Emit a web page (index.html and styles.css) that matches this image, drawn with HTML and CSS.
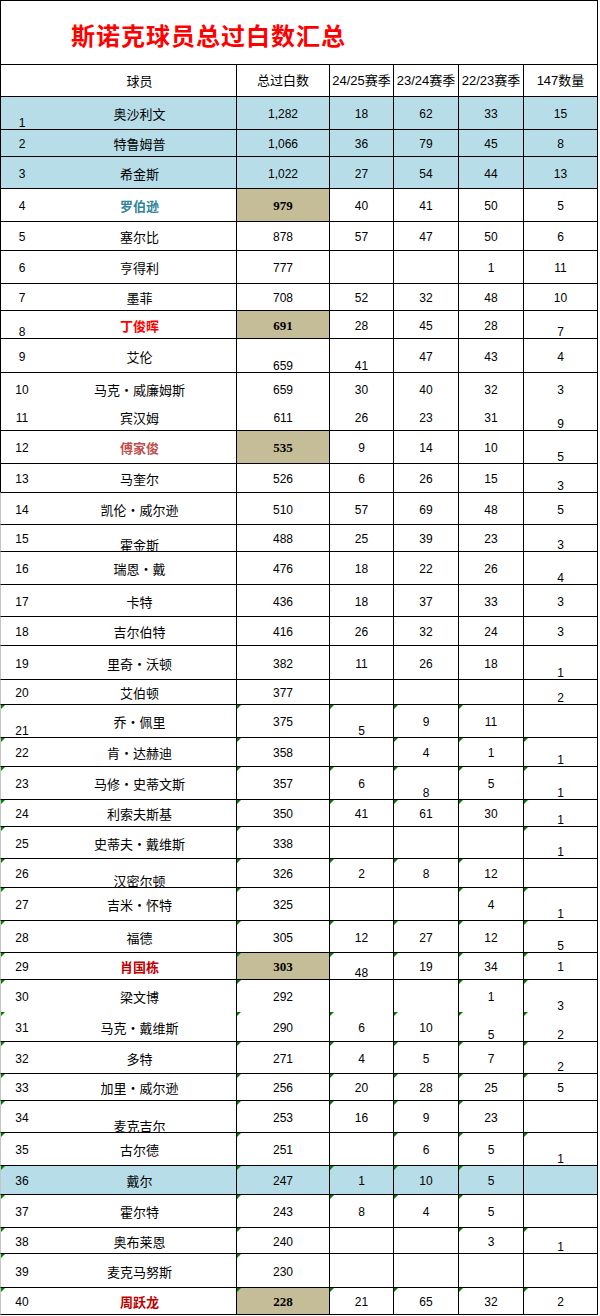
FILE: index.html
```html
<!DOCTYPE html>
<html lang="zh">
<head>
<meta charset="utf-8">
<title>斯诺克球员总过白数汇总</title>
<link rel="stylesheet" href="styles.css">
</head>
<body>
<div class="sheet">
  <div class="title"><h1>斯诺克球员总过白数汇总</h1></div>
  <div class="row head h32"><div class="c rk"></div><div class="c nm">球员</div><div class="c n">总过白数</div><div class="c n">24/25赛季</div><div class="c n">23/24赛季</div><div class="c n">22/23赛季</div><div class="c n">147数量</div></div>

  <div class="row h33 blue"><div class="c rk b">1</div><div class="c nm">奥沙利文</div><div class="c n">1,282</div><div class="c n">18</div><div class="c n">62</div><div class="c n">33</div><div class="c n">15</div></div>
  <div class="row h27 blue"><div class="c rk">2</div><div class="c nm">特鲁姆普</div><div class="c n">1,066</div><div class="c n">36</div><div class="c n">79</div><div class="c n">45</div><div class="c n">8</div></div>
  <div class="row h32 blue"><div class="c rk">3</div><div class="c nm">希金斯</div><div class="c n">1,022</div><div class="c n">27</div><div class="c n">54</div><div class="c n">44</div><div class="c n">13</div></div>
  <div class="row h33"><div class="c rk">4</div><div class="c nm teal">罗伯逊</div><div class="c n hl">979</div><div class="c n">40</div><div class="c n">41</div><div class="c n">50</div><div class="c n">5</div></div>
  <div class="row h29"><div class="c rk">5</div><div class="c nm">塞尔比</div><div class="c n">878</div><div class="c n">57</div><div class="c n">47</div><div class="c n">50</div><div class="c n">6</div></div>
  <div class="row h33"><div class="c rk">6</div><div class="c nm">亨得利</div><div class="c n">777</div><div class="c n"></div><div class="c n"></div><div class="c n">1</div><div class="c n">11</div></div>
  <div class="row h27"><div class="c rk">7</div><div class="c nm">墨菲</div><div class="c n">708</div><div class="c n">52</div><div class="c n">32</div><div class="c n">48</div><div class="c n">10</div></div>
  <div class="row h28"><div class="c rk b">8</div><div class="c nm red">丁俊晖</div><div class="c n hl">691</div><div class="c n">28</div><div class="c n">45</div><div class="c n">28</div><div class="c n b">7</div></div>
  <div class="row h34"><div class="c rk">9</div><div class="c nm">艾伦</div><div class="c n b">659</div><div class="c n b">41</div><div class="c n">47</div><div class="c n">43</div><div class="c n">4</div></div>
  <div class="row h32"><div class="c rk">10</div><div class="c nm">马克·威廉姆斯</div><div class="c n">659</div><div class="c n">30</div><div class="c n">40</div><div class="c n">32</div><div class="c n">3</div></div>
  <div class="row h26 nb"><div class="c rk">11</div><div class="c nm">宾汉姆</div><div class="c n">611</div><div class="c n">26</div><div class="c n">23</div><div class="c n">31</div><div class="c n b">9</div></div>
  <div class="row h33"><div class="c rk">12</div><div class="c nm rose">傅家俊</div><div class="c n hl">535</div><div class="c n">9</div><div class="c n">14</div><div class="c n">10</div><div class="c n b">5</div></div>
  <div class="row h29"><div class="c rk">13</div><div class="c nm">马奎尔</div><div class="c n">526</div><div class="c n">6</div><div class="c n">26</div><div class="c n">15</div><div class="c n b">3</div></div>
  <div class="row h32 lg"><div class="c rk">14</div><div class="c nm">凯伦·威尔逊</div><div class="c n">510</div><div class="c n">57</div><div class="c n">69</div><div class="c n">48</div><div class="c n">5</div></div>
  <div class="row h27 lg"><div class="c rk">15</div><div class="c nm b">霍金斯</div><div class="c n">488</div><div class="c n">25</div><div class="c n">39</div><div class="c n">23</div><div class="c n b">3</div></div>
  <div class="row h33 lg"><div class="c rk">16</div><div class="c nm">瑞恩·戴</div><div class="c n">476</div><div class="c n">18</div><div class="c n">22</div><div class="c n">26</div><div class="c n b">4</div></div>
  <div class="row h32 lg"><div class="c rk">17</div><div class="c nm">卡特</div><div class="c n">436</div><div class="c n">18</div><div class="c n">37</div><div class="c n">33</div><div class="c n">3</div></div>
  <div class="row h29 lg"><div class="c rk">18</div><div class="c nm">吉尔伯特</div><div class="c n">416</div><div class="c n">26</div><div class="c n">32</div><div class="c n">24</div><div class="c n">3</div></div>
  <div class="row h34 lg"><div class="c rk">19</div><div class="c nm">里奇·沃顿</div><div class="c n">382</div><div class="c n">11</div><div class="c n">26</div><div class="c n">18</div><div class="c n b">1</div></div>
  <div class="row h25 lg"><div class="c rk">20</div><div class="c nm">艾伯顿</div><div class="c n">377</div><div class="c n"></div><div class="c n"></div><div class="c n"></div><div class="c n b">2</div></div>
  <div class="row h33 lg"><div class="c rk b g">21</div><div class="c nm">乔·佩里</div><div class="c n g">375</div><div class="c n g b">5</div><div class="c n g">9</div><div class="c n g">11</div><div class="c n"></div></div>
  <div class="row h29 lg"><div class="c rk g">22</div><div class="c nm">肯·达赫迪</div><div class="c n g">358</div><div class="c n"></div><div class="c n g">4</div><div class="c n g">1</div><div class="c n g b">1</div></div>
  <div class="row h33 lg"><div class="c rk g">23</div><div class="c nm">马修·史蒂文斯</div><div class="c n g">357</div><div class="c n g">6</div><div class="c n g b">8</div><div class="c n g">5</div><div class="c n g b">1</div></div>
  <div class="row h27 lg"><div class="c rk g">24</div><div class="c nm">利索夫斯基</div><div class="c n g">350</div><div class="c n g">41</div><div class="c n g">61</div><div class="c n g">30</div><div class="c n g b">1</div></div>
  <div class="row h32 lg"><div class="c rk g">25</div><div class="c nm">史蒂夫·戴维斯</div><div class="c n g">338</div><div class="c n"></div><div class="c n"></div><div class="c n"></div><div class="c n g b">1</div></div>
  <div class="row h29 lg"><div class="c rk g">26</div><div class="c nm b">汉密尔顿</div><div class="c n g">326</div><div class="c n g">2</div><div class="c n g">8</div><div class="c n g">12</div><div class="c n"></div></div>
  <div class="row h33 lg"><div class="c rk g">27</div><div class="c nm">吉米·怀特</div><div class="c n g">325</div><div class="c n"></div><div class="c n"></div><div class="c n g">4</div><div class="c n g b">1</div></div>
  <div class="row h32 lg"><div class="c rk g">28</div><div class="c nm">福德</div><div class="c n g">305</div><div class="c n g">12</div><div class="c n g">27</div><div class="c n g">12</div><div class="c n g b">5</div></div>
  <div class="row h27 lg"><div class="c rk g">29</div><div class="c nm dred">肖国栋</div><div class="c n g hl">303</div><div class="c n g b">48</div><div class="c n g">19</div><div class="c n g">34</div><div class="c n g">1</div></div>
  <div class="row h33 lg"><div class="c rk g">30</div><div class="c nm">梁文博</div><div class="c n g">292</div><div class="c n"></div><div class="c n"></div><div class="c n g">1</div><div class="c n g b">3</div></div>
  <div class="row h29 lg nb"><div class="c rk g">31</div><div class="c nm">马克·戴维斯</div><div class="c n g">290</div><div class="c n g">6</div><div class="c n g">10</div><div class="c n g b">5</div><div class="c n g b">2</div></div>
  <div class="row h32 lg"><div class="c rk g">32</div><div class="c nm">多特</div><div class="c n g">271</div><div class="c n g">4</div><div class="c n g">5</div><div class="c n g">7</div><div class="c n g b">2</div></div>
  <div class="row h27 lg"><div class="c rk g">33</div><div class="c nm">加里·威尔逊</div><div class="c n g">256</div><div class="c n g">20</div><div class="c n g">28</div><div class="c n g">25</div><div class="c n g">5</div></div>
  <div class="row h32 lg"><div class="c rk g">34</div><div class="c nm b">麦克吉尔</div><div class="c n g">253</div><div class="c n g">16</div><div class="c n g">9</div><div class="c n g">23</div><div class="c n"></div></div>
  <div class="row h33 lg"><div class="c rk g">35</div><div class="c nm">古尔德</div><div class="c n g">251</div><div class="c n"></div><div class="c n g">6</div><div class="c n g">5</div><div class="c n g b">1</div></div>
  <div class="row h29 lg blue"><div class="c rk g">36</div><div class="c nm">戴尔</div><div class="c n g">247</div><div class="c n g">1</div><div class="c n g">10</div><div class="c n g">5</div><div class="c n"></div></div>
  <div class="row h33 lg"><div class="c rk g">37</div><div class="c nm">霍尔特</div><div class="c n g">243</div><div class="c n g">8</div><div class="c n g">4</div><div class="c n g">5</div><div class="c n"></div></div>
  <div class="row h26 lg"><div class="c rk g">38</div><div class="c nm">奥布莱恩</div><div class="c n g">240</div><div class="c n"></div><div class="c n"></div><div class="c n g">3</div><div class="c n g b">1</div></div>
  <div class="row h34 lg"><div class="c rk g">39</div><div class="c nm">麦克马努斯</div><div class="c n g">230</div><div class="c n"></div><div class="c n"></div><div class="c n"></div><div class="c n"></div></div>
  <div class="row h28 lg last"><div class="c rk g">40</div><div class="c nm dred">周跃龙</div><div class="c n g hl">228</div><div class="c n g">21</div><div class="c n g">65</div><div class="c n g">32</div><div class="c n g">2</div></div>
</div>
</body>
</html>
```

FILE: styles.css
```css
html, body {
  margin: 0;
  padding: 0;
  background: #ffffff;
}

.sheet {
  width: 598px;
  color: #000000;
}

.title {
  height: 64px;
  box-sizing: border-box;
  border: 1px solid #000000;
  border-bottom: none;
  display: flex;
  align-items: center;
  padding-left: 70px;
  padding-top: 4px;
}

.title h1 {
  margin: 0;
  font-family: "Noto Sans CJK SC", sans-serif;
  font-weight: 700;
  font-size: 24px;
  line-height: 1;
  letter-spacing: 1px;
  color: #ff0000;
}

.row {
  display: grid;
  grid-template-columns: 39px 196px 93px 64px 65px 65px 74px;
  box-sizing: border-box;
  border-top: 1px solid #000000;
  border-left: 1px solid #000000;
  border-right: 1px solid #000000;
}

.row.lg { border-left-color: #c4c4c4; }
.row.nb { border-top: none; }
.row.last { border-bottom: 1px solid #000000; }
.row.blue { background: #b7dde8; }

.h25 { height: 25px; }
.h26 { height: 26px; }
.h27 { height: 27px; }
.h28 { height: 28px; }
.h29 { height: 29px; }
.h32 { height: 32px; }
.h33 { height: 33px; }
.h34 { height: 34px; }

.c {
  position: relative;
  display: flex;
  align-items: center;
  justify-content: center;
  box-sizing: border-box;
  min-width: 0;
  padding-top: 2px;
  font-family: "Liberation Sans", "Noto Sans CJK SC", sans-serif;
  font-size: 12px;
  line-height: 14px;
  white-space: nowrap;
}

.c.n { border-left: 1px solid #000000; }

.c.b {
  align-items: flex-end;
  padding-top: 0;
  line-height: 12px;
}

.rk { padding-left: 3px; }

.nm {
  padding-left: 3px;
  font-family: "Noto Sans CJK SC", sans-serif;
  font-size: 13px;
}

.head .c {
  padding-top: 0;
  font-family: "Liberation Sans", "Noto Sans CJK SC", sans-serif;
  font-size: 13px;
}

.head .c.nm {
  font-family: "Noto Sans CJK SC", sans-serif;
}

.hl {
  background: #c4bd97;
  font-family: "Liberation Serif", serif;
  font-weight: 700;
  font-size: 13px;
}

.teal { color: #31849b; font-weight: 700; }
.red { color: #ff0000; font-weight: 700; }
.rose { color: #c0504d; font-weight: 700; }
.dred { color: #c00000; font-weight: 700; }

.g::before {
  content: "";
  position: absolute;
  left: 0;
  top: 0;
  border-top: 4px solid #008000;
  border-right: 4px solid transparent;
}
```
